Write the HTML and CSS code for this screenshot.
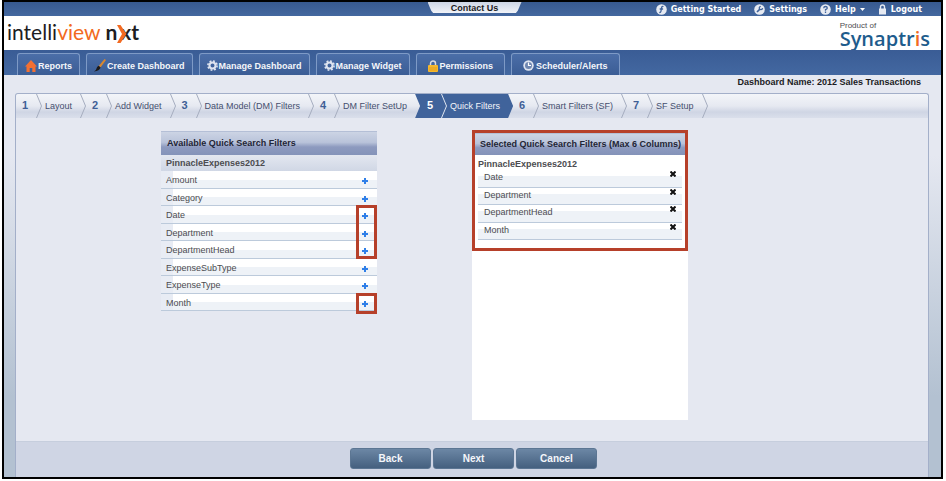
FILE: index.html
```html
<!DOCTYPE html>
<html lang="en">
<head>
  <meta charset="UTF-8" />
  <meta name="viewport" content="width=device-width, initial-scale=1.0" />
  <title>Intelliview NXT - Quick Filters</title>
  <link rel="stylesheet" href="styles.css">
</head>
<body>
  <div class="app">
    <div class="topbar">
      <a class="contact" href="#">Contact Us</a>
      <div class="top-links">
        <a href="#">
          <svg width="11" height="11" viewBox="0 0 11 11"><circle cx="5.500" cy="5.500" r="5.300" fill="#e6eaf2"/><path d="M7.500 2.500Q5.800 2 5.500 4L5 7Q4.700 8.800 3.300 8.400M3.700 5h3.400" stroke="#40639b" stroke-width="1.300" fill="none"/></svg>
          Getting Started</a>
        <a href="#">
          <svg width="11" height="11" viewBox="0 0 11 11"><circle cx="5.500" cy="5.500" r="5.300" fill="#e6eaf2"/><path d="M3 8L6 5" stroke="#40639b" stroke-width="1.700"/><path d="M6.800 2.300A1.700 1.700 0 1 0 8.600 4.200" stroke="#40639b" stroke-width="1.300" fill="none"/></svg>
          Settings</a>
        <a href="#">
          <svg width="11" height="11" viewBox="0 0 11 11"><circle cx="5.500" cy="5.500" r="5.300" fill="#e6eaf2"/><path d="M3.700 4.200Q3.800 2.500 5.500 2.500T7.300 4Q7.300 4.900 5.500 5.700V6.800M5.500 7.600V9" stroke="#40639b" stroke-width="1.300" fill="none"/></svg>
          Help
          <svg width="5" height="3" viewBox="0 0 5 3"><path d="M0 0h5L2.500 3z" fill="#fff"/></svg></a>
        <a href="#">
          <svg width="9" height="11" viewBox="0 0 9 11"><path d="M2.500 5V3a2 2 0 0 1 4 0v2" stroke="#e6eaf2" stroke-width="1.400" fill="none"/><rect x="1" y="4.500" width="7" height="6" fill="#e6eaf2"/></svg>
          Logout</a>
      </div>
    </div>

    <div class="brand">
      <div class="logo">intelli<span class="orange">view</span> <b>n<span class="logo-x">x<svg width="10" height="18" viewBox="0 0 10 18"><path d="M0 0H3.500L9.500 9L3.500 18H0L5 9z" fill="#f26a21"/></svg></span>t</b></div>
      <div class="vendor">
        <span class="vendor-note">Product of</span>
        <span class="vendor-name">Synaptr<span class="orange">i</span>s</span>
      </div>
    </div>

    <nav class="tabs">
      <a href="#">
        <svg width="12" height="12" viewBox="0 0 12 12"><path d="M6 0L12 6.500H10.500V12H7.300V8H4.700V12H1.500V6.500H0z" fill="#f37032"/></svg>
        Reports</a>
      <a href="#">
        <svg width="12" height="13" viewBox="0 0 12 13"><path d="M10.500 0L12 1L6.500 8.500L4.700 7z" fill="#d9882f"/><path d="M4.700 6.800L6.600 8.400Q5.500 11.800 0 12.500Q2.500 11 2.700 9Q3 7.500 4.700 6.800z" fill="#1c1a1a"/></svg>
        Create Dashboard</a>
      <a href="#">
        <svg width="11" height="11" viewBox="0 0 11 11"><circle cx="5.500" cy="5.500" r="4.600" fill="none" stroke="#dfe5f0" stroke-width="1.600" stroke-dasharray="1.900 1.712"/><circle cx="5.500" cy="5.500" r="3" fill="none" stroke="#dfe5f0" stroke-width="2"/></svg>
        Manage Dashboard</a>
      <a href="#">
        <svg width="11" height="11" viewBox="0 0 11 11"><circle cx="5.500" cy="5.500" r="4.600" fill="none" stroke="#dfe5f0" stroke-width="1.600" stroke-dasharray="1.900 1.712"/><circle cx="5.500" cy="5.500" r="3" fill="none" stroke="#dfe5f0" stroke-width="2"/></svg>
        Manage Widget</a>
      <a class="wide" href="#">
        <svg width="10" height="12" viewBox="0 0 10 12"><path d="M2.500 6V3.500a2.500 2.500 0 0 1 5 0V6" stroke="#d9dbe0" stroke-width="1.500" fill="none"/><rect x="0" y="5" width="10" height="7" rx="1" fill="#f5b82e"/><path d="M1 8h8M1 10h8" stroke="#d98e12" stroke-width=".6"/></svg>
        Permissions</a>
      <a class="wide" href="#">
        <svg width="11" height="11" viewBox="0 0 11 11"><circle cx="5.500" cy="5.500" r="5.200" fill="#dfe5f0"/><circle cx="5.500" cy="5.500" r="3.500" fill="#6f87b1"/><path d="M5.500 2.500V5.500H8" stroke="#fff" stroke-width="1.200" fill="none"/></svg>
        Scheduler/Alerts</a>
    </nav>

    <div class="body">
      <div class="dashboard-name">Dashboard Name: 2012 Sales Transactions</div>

      <div class="panel">
        <ol class="wizard">
          <li><b>1</b><svg class="sep" viewBox="0 0 6 24"><path d="M.5 0L5.500 12L.5 24"/></svg><a href="#">Layout</a><svg class="sep" viewBox="0 0 6 24"><path d="M.5 0L5.500 12L.5 24"/></svg></li>
          <li><b>2</b><svg class="sep" viewBox="0 0 6 24"><path d="M.5 0L5.500 12L.5 24"/></svg><a href="#">Add Widget</a><svg class="sep" viewBox="0 0 6 24"><path d="M.5 0L5.500 12L.5 24"/></svg></li>
          <li><b>3</b><svg class="sep" viewBox="0 0 6 24"><path d="M.5 0L5.500 12L.5 24"/></svg><a href="#">Data Model (DM) Filters</a><svg class="sep" viewBox="0 0 6 24"><path d="M.5 0L5.500 12L.5 24"/></svg></li>
          <li><b>4</b><svg class="sep" viewBox="0 0 6 24"><path d="M.5 0L5.500 12L.5 24"/></svg><a href="#">DM Filter SetUp</a></li>
          <li class="active"><b>5</b><svg class="sep" viewBox="0 0 6 24"><path d="M.5 0L5.500 12L.5 24"/></svg><a href="#">Quick Filters</a></li>
          <li><b>6</b><svg class="sep" viewBox="0 0 6 24"><path d="M.5 0L5.500 12L.5 24"/></svg><a href="#">Smart Filters (SF)</a><svg class="sep" viewBox="0 0 6 24"><path d="M.5 0L5.500 12L.5 24"/></svg></li>
          <li><b>7</b><svg class="sep" viewBox="0 0 6 24"><path d="M.5 0L5.500 12L.5 24"/></svg><a href="#">SF Setup</a><svg class="sep" viewBox="0 0 6 24"><path d="M.5 0L5.500 12L.5 24"/></svg></li>
        </ol>

        <div class="columns">
          <section class="list available">
            <h2>Available Quick Search Filters</h2>
            <h3>PinnacleExpenses2012</h3>
            <ul>
              <li>Amount<button aria-label="Add Amount"></button></li>
              <li>Category<button aria-label="Add Category"></button></li>
              <li>Date<button aria-label="Add Date"></button><span class="mark mark-three"></span></li>
              <li>Department<button aria-label="Add Department"></button></li>
              <li>DepartmentHead<button aria-label="Add DepartmentHead"></button></li>
              <li>ExpenseSubType<button aria-label="Add ExpenseSubType"></button></li>
              <li>ExpenseType<button aria-label="Add ExpenseType"></button></li>
              <li>Month<button aria-label="Add Month"></button><span class="mark"></span></li>
            </ul>
          </section>

          <section class="list selected">
            <div class="marked">
              <h2>Selected Quick Search Filters (Max 6 Columns)</h2>
              <h3>PinnacleExpenses2012</h3>
              <ul>
                <li>Date<button aria-label="Remove Date"><svg width="6" height="6" viewBox="0 0 6 6"><path d="M.5 .5L5.500 5.500M5.500 .5L.5 5.500"/></svg></button></li>
                <li>Department<button aria-label="Remove Department"><svg width="6" height="6" viewBox="0 0 6 6"><path d="M.5 .5L5.500 5.500M5.500 .5L.5 5.500"/></svg></button></li>
                <li>DepartmentHead<button aria-label="Remove DepartmentHead"><svg width="6" height="6" viewBox="0 0 6 6"><path d="M.5 .5L5.500 5.500M5.500 .5L.5 5.500"/></svg></button></li>
                <li>Month<button aria-label="Remove Month"><svg width="6" height="6" viewBox="0 0 6 6"><path d="M.5 .5L5.500 5.500M5.500 .5L.5 5.500"/></svg></button></li>
              </ul>
            </div>
          </section>
        </div>

        <div class="actions">
          <button>Back</button>
          <button>Next</button>
          <button>Cancel</button>
        </div>
      </div>
    </div>
  </div>
</body>
</html>
```
FILE: styles.css
```css
* {
  box-sizing: border-box;
}
body {
  margin: 0;
  padding: 0 3px 2px 2px;
  background: #fff;
  font-family: "Liberation Sans", Arial, sans-serif;
  font-size: 9px;
  color: #4c4c50;
}
a {
  color: inherit;
  text-decoration: none;
}
h2, h3, ul, ol {
  margin: 0;
  padding: 0;
  list-style: none;
}
button {
  font-family: inherit;
  border: none;
  padding: 0;
  cursor: pointer;
}
.app {
  display: flex;
  flex-direction: column;
  min-height: calc(100vh - 2px);
  border: 2px solid #000;
}
.topbar {
  display: grid;
  grid-template-columns: 1fr auto 1fr;
  height: 14px;
  background: linear-gradient(#37598f, #44689f);
}
.contact {
  grid-column: 2;
  width: 94px;
  height: 11px;
  margin-left: 4px;
  line-height: 12px;
  text-align: center;
  font-weight: bold;
  color: #1b1b1f;
  background: linear-gradient(#cdd5e5, #f1f3f8);
  clip-path: polygon(0 0, 100% 0, 96% 80%, 94% 100%, 6% 100%, 4% 80%);
}
.top-links {
  display: flex;
  justify-content: flex-end;
  align-items: center;
  gap: 13px;
  padding-right: 19px;
  font-family: "DejaVu Sans", Verdana, sans-serif;
  font-size: 8px;
  font-weight: bold;
  color: #fff;
}
.top-links a {
  display: flex;
  align-items: center;
  gap: 4px;
  white-space: nowrap;
}
.brand {
  display: flex;
  justify-content: space-between;
  height: 34px;
  padding: 0 11px 0 3px;
}
.logo {
  font-family: Lato, sans-serif;
  font-size: 21px;
  line-height: 32px;
  color: #1d1d1f;
}
.orange {
  color: #f26a21;
}
.logo-x {
  position: relative;
  padding-left: 3px;
}
.logo-x svg {
  position: absolute;
  left: 0;
  top: 6px;
}
.vendor {
  display: flex;
  flex-direction: column;
  padding-top: 6px;
}
.vendor-note {
  font-size: 8px;
  line-height: 8px;
}
.vendor-name {
  font-family: "Open Sans", sans-serif;
  font-size: 20px;
  font-weight: 600;
  line-height: 18px;
  color: #1e5c8c;
}
.tabs {
  display: flex;
  gap: 6px;
  height: 25px;
  padding: 3px 13px 0;
  background: linear-gradient(#3a5c95, #4368a1);
}
.tabs a {
  display: flex;
  align-items: center;
  gap: 1px;
  padding: 2px 7px 0;
  border: 1px solid #7e9ac6;
  border-bottom: none;
  border-radius: 3px 3px 0 0;
  background: linear-gradient(#4b6ea8, #3b5d95);
  font-weight: bold;
  color: #f4f6fa;
}
.tabs .wide {
  gap: 2px;
  padding: 2px 11px 0;
}
.body {
  flex: 1;
  display: flex;
  flex-direction: column;
  padding: 0 12px 0 11px;
  background: linear-gradient(#e5e8f1 20%, #b3c1d1 80%);
}
.dashboard-name {
  height: 18px;
  margin: 0 -12px 0 -11px;
  padding-right: 20px;
  line-height: 15px;
  text-align: right;
  font-weight: bold;
  color: #1b1b1f;
  background: #e5e8f1;
}
.panel {
  flex: 1;
  display: flex;
  flex-direction: column;
  border: 1px solid #a3afc9;
  border-bottom: none;
  border-radius: 3px 3px 0 0;
  background: #e5e8f1;
}
.wizard {
  display: flex;
  height: 24px;
  border-radius: 3px 3px 0 0;
  background: linear-gradient(#f3f5f9, #e6e9f1 50%, #cfd5e4 75%, #dadfeb);
  color: #454f6e;
}
.wizard li {
  display: flex;
  align-items: center;
}
.wizard b {
  width: 20px;
  padding: 0 0 2px 6px;
  font-size: 11px;
  color: #3f5f96;
}
.wizard a {
  padding: 0 8px 0 3px;
}
.sep {
  width: 6px;
  height: 24px;
  fill: none;
  stroke: #a5adbf;
}
.wizard .active {
  background: #40639b;
  color: #f4f6fa;
  clip-path: polygon(0 0, calc(100% - 5px) 0, 100% 50%, calc(100% - 5px) 100%, 0 100%, 5px 50%);
}
.active b {
  width: 26px;
  padding-left: 12px;
  color: #fff;
}
.wizard .active b {
  width: 26px;
  padding-left: 12px;
  color: #fff;
}
.wizard .active a {
  padding-right: 13px;
}
.active .sep {
  stroke: #dfe5f0;
}
.columns {
  flex: 1;
  display: flex;
  align-items: flex-start;
  gap: 95px;
  padding: 12px 0 21px 145px;
}
.list {
  width: 216px;
}
.list h2 {
  height: 24px;
  padding-left: 6px;
  line-height: 22px;
  font-size: 9px;
  white-space: nowrap;
  color: #1f2536;
  background: linear-gradient(#ccd4e4, #b9c3da 45%, #8d9abf 65%, #8493b9);
  border-top: 1px solid #b4bfd6;
}
.list h3 {
  padding-left: 5px;
  font-size: 9px;
  line-height: 16px;
}
.list li {
  position: relative;
  display: flex;
  justify-content: space-between;
  border-bottom: 1px solid #bccadb;
}
.available h3 {
  background: linear-gradient(#e3e7f0, #d0d7e5);
}
.available {
  margin-top: 1px;
}
.available li {
  height: 18px;
  padding: 0 9px 0 5px;
  line-height: 18px;
  background: linear-gradient(90deg, #e8ecf4 12px, transparent 12px), linear-gradient(#fff 50%, #eef2f7 50%);
}
.available li:nth-child(even) {
  height: 17px;
}
.available button {
  width: 6px;
  background:
    linear-gradient(#2f7fe8, #2f7fe8) center 7px / 2px 6px no-repeat,
    linear-gradient(#2f7fe8, #2f7fe8) center 9px / 6px 2px no-repeat;
}
.mark {
  position: absolute;
  z-index: 1;
  right: 0;
  top: -1px;
  width: 21px;
  height: 21px;
  border: 3px solid #b6402a;
}
.mark-three {
  height: 54px;
}
.selected {
  min-height: 290px;
  background: #fff;
}
.marked {
  height: 121px;
  border: 3px solid #b6402a;
}
.marked h2 {
  height: 22px;
  padding-left: 5px;
  line-height: 20px;
}
.marked h3 {
  padding: 3px 0 0 3px;
  line-height: 12px;
}
.marked ul {
  padding: 0 3px;
}
.marked li {
  height: 18px;
  padding: 0 6px;
  line-height: 14px;
  background: linear-gradient(#fff 35%, #eef2f7 35%);
}
.marked li:nth-child(even) {
  height: 17px;
}
.marked button {
  display: flex;
  padding-top: 1px;
  background: none;
}
.marked button svg {
  stroke: #111;
  stroke-width: 2;
}
.actions {
  display: flex;
  justify-content: center;
  gap: 2px;
  padding: 6px 0 8px 3px;
  border-top: 1px solid #c6cedd;
  background: #cfd5e4;
}
.actions button {
  width: 81px;
  height: 21px;
  border: 1px solid #5c7693;
  border-radius: 3px;
  background: linear-gradient(#6c87a5, #45607f);
  font-size: 10px;
  font-weight: bold;
  color: #f4f6fa;
}
```
